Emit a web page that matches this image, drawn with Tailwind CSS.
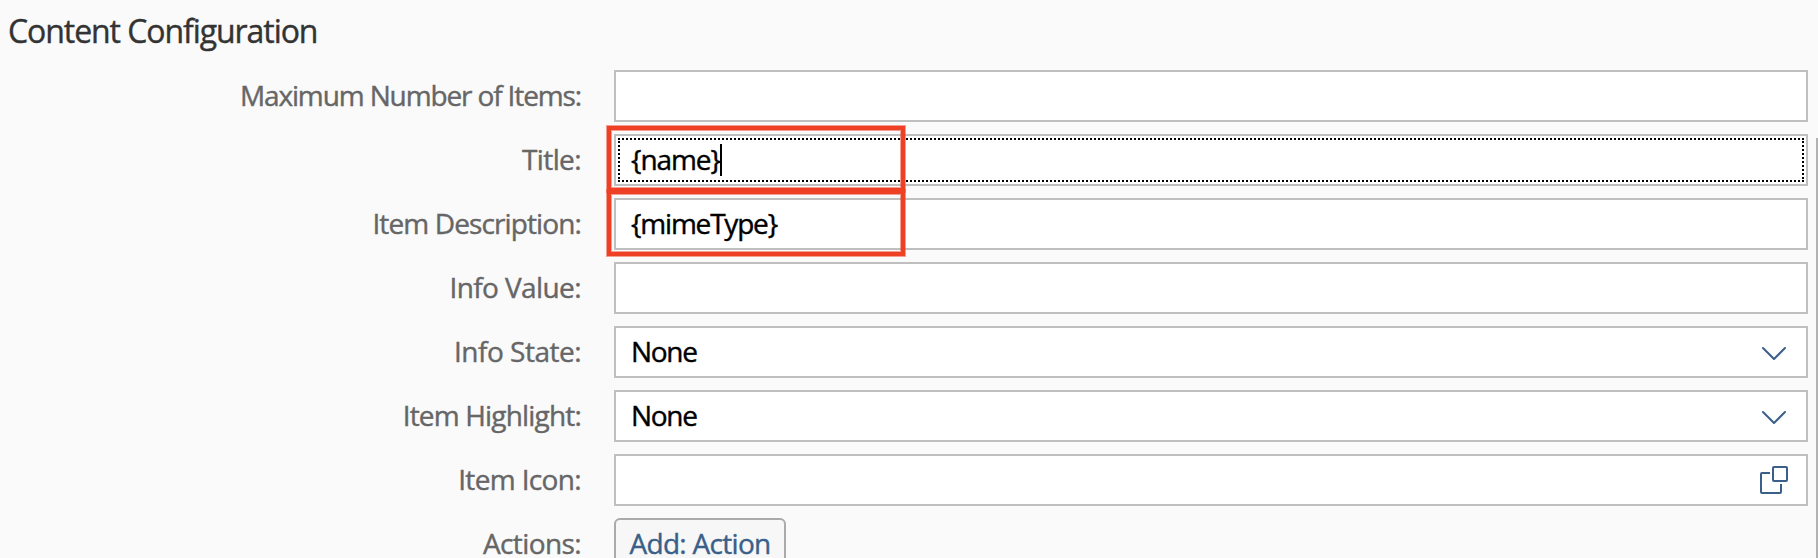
<!DOCTYPE html>
<html lang="en">
<head>
<meta charset="utf-8">
<title>Content Configuration</title>
<script src="https://cdn.jsdelivr.net/npm/@tailwindcss/browser@4"></script>
</head>
<body class="relative h-[558px] w-[1818px] overflow-hidden bg-[#fafafa] font-['Open_Sans','Noto_Sans',sans-serif] text-[28px] text-black [-webkit-text-stroke:0.4px]">
<h2 class="flex h-[70px] items-start pt-[9px] pl-[8px] text-[32px] leading-[44px] text-[#333]"><span class="tracking-[-1.07px]">Content Configuration</span></h2>
<main class="grid grid-cols-[581px_1194px] gap-x-[33px] gap-y-[12px] leading-[50px] whitespace-nowrap">
  <div class="text-right text-[#666]"><span class="tracking-[-1.13px]">Maximum Number of Items:</span></div>
  <div class="h-[52px] border-2 border-[#bfbfbf] bg-white"></div>

  <div class="text-right text-[#666]"><span class="tracking-[-0.6px]">Title:</span></div>
  <div class="h-[52px] border-2 border-[#bfbfbf] bg-white p-[2px]">
    <div class="flex h-[44px] items-center border-2 border-dotted border-black pl-[11px]"><span class="pb-[2px] tracking-[-1.1px]">{name}</span><i class="h-8 w-[2px] bg-black"></i></div>
  </div>

  <div class="text-right text-[#666]"><span class="tracking-[-0.88px]">Item Description:</span></div>
  <div class="flex h-[52px] items-center border-2 border-[#bfbfbf] bg-white pl-[15px]"><span class="pb-[2px] tracking-[-1.2px]">{mimeType}</span></div>

  <div class="text-right text-[#666]"><span class="tracking-[-0.6px]">Info Value:</span></div>
  <div class="h-[52px] border-2 border-[#bfbfbf] bg-white"></div>

  <div class="text-right text-[#666]"><span class="tracking-[-0.5px]">Info State:</span></div>
  <div class="flex h-[52px] items-center justify-between border-2 border-[#bfbfbf] bg-white pr-[18px] pl-[15px]"><span class="pb-[2px] tracking-[-1.3px]">None</span>
    <svg class="h-7 w-7" viewBox="0 0 28 28" fill="none" stroke="#3a5f88" stroke-width="2" stroke-linecap="round" stroke-linejoin="round"><path d="M3 10 14 21 25 10"/></svg></div>

  <div class="text-right text-[#666]"><span class="tracking-[-0.82px]">Item Highlight:</span></div>
  <div class="flex h-[52px] items-center justify-between border-2 border-[#bfbfbf] bg-white pr-[18px] pl-[15px]"><span class="pb-[2px] tracking-[-1.3px]">None</span>
    <svg class="h-7 w-7" viewBox="0 0 28 28" fill="none" stroke="#3a5f88" stroke-width="2" stroke-linecap="round" stroke-linejoin="round"><path d="M3 10 14 21 25 10"/></svg></div>

  <div class="text-right text-[#666]"><span class="tracking-[-0.65px]">Item Icon:</span></div>
  <div class="flex h-[52px] items-center justify-end border-2 border-[#bfbfbf] bg-white pr-[18px]">
    <svg class="h-7 w-7" viewBox="0 0 28 28" fill="none" stroke="#3a5f88" stroke-width="2"><rect x="13" y="1" width="14" height="14" rx="1"/><path d="M10 7H2Q1 7 1 8V26Q1 27 2 27H20Q21 27 21 26V18"/></svg></div>

  <div class="text-right text-[#666]"><span class="tracking-[-0.6px]">Actions:</span></div>
  <button class="flex h-[52px] w-[172px] items-center justify-center rounded-[6px] border-2 border-[#aaa] bg-[#f7f7f7] text-[#3a5f88]"><span class="pb-[2px] tracking-[-0.7px]">Add: Action</span></button>
</main>
<div class="absolute top-[126px] left-[607px] h-[66px] w-[298px] border-4 border-[#ee4025] ring-1 ring-[#ee4025]/50 inset-ring-1 inset-ring-[#ee4025]/50"></div>
<div class="absolute top-[190px] left-[607px] h-[66px] w-[298px] border-4 border-[#ee4025] ring-1 ring-[#ee4025]/50 inset-ring-1 inset-ring-[#ee4025]/50"></div>
<div class="absolute top-[138px] right-0 bottom-0 w-[2px] bg-[#b2b2b2]"></div>
</body>
</html>
